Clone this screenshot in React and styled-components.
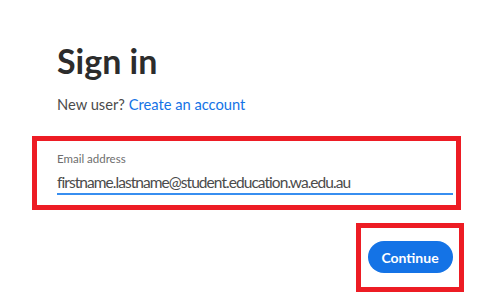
import React from 'react';
import styled, { createGlobalStyle } from 'styled-components';

const GlobalStyle = createGlobalStyle`
  html, body {
    margin: 0;
    padding: 0;
    background: #ffffff;
  }
  body {
    font-family: Lato, "Open Sans", sans-serif;
  }
`

const Page = styled.div`
  width: 432px;
  padding: 41px 0 0 32px;
  display: flex;
  flex-direction: column;
`

const Title = styled.h1`
  margin: 0 0 0 25px;
  font-size: 34px;
  line-height: 40px;
  font-weight: 700;
  color: #2c2c2c;
`

const Subtitle = styled.p`
  margin: 13px 0 0 25px;
  font-size: 14.7px;
  line-height: 20px;
  color: #4b4b4b;
`

const Link = styled.a`
  color: #1473e6;
  text-decoration: none;
`

const Highlight = styled.div`
  border: 5px solid #ed1c24;
  box-sizing: border-box;
`

const FieldBox = styled(Highlight)`
  width: 429px;
  margin-top: 22px;
  padding: 10px 3px 10px 20px;
`

const Label = styled.label`
  display: block;
  font-size: 11.5px;
  line-height: 16px;
  color: #6e6e6e;
`

const Input = styled.div`
  margin-top: 4px;
  border-bottom: 2px solid #378ef0;
  font-size: 15.5px;
  letter-spacing: -0.95px;
  line-height: 22px;
  color: #4b4b4b;
`

const Actions = styled.div`
  display: flex;
  justify-content: flex-end;
  margin-top: 13px;
`

const ButtonBox = styled(Highlight)`
  width: 108px;
  height: 69px;
  display: flex;
  align-items: flex-start;
  justify-content: center;
  padding-top: 13px;
`

const Button = styled.button`
  width: 85px;
  height: 32px;
  border: none;
  border-radius: 16px;
  background: #1473e6;
  color: #ffffff;
  font-family: Lato, "Open Sans", sans-serif;
  font-size: 14px;
  font-weight: 700;
  cursor: pointer;
`

export default function App() {
  return (
    <>
      <GlobalStyle />
      <Page>
        <Title>Sign in</Title>
        <Subtitle>
          New user? <Link href="#">Create an account</Link>
        </Subtitle>
        <FieldBox>
          <Label>Email address</Label>
          <Input>firstname.lastname@student.education.wa.edu.au</Input>
        </FieldBox>
        <Actions>
          <ButtonBox>
            <Button>Continue</Button>
          </ButtonBox>
        </Actions>
      </Page>
    </>
  );
}
